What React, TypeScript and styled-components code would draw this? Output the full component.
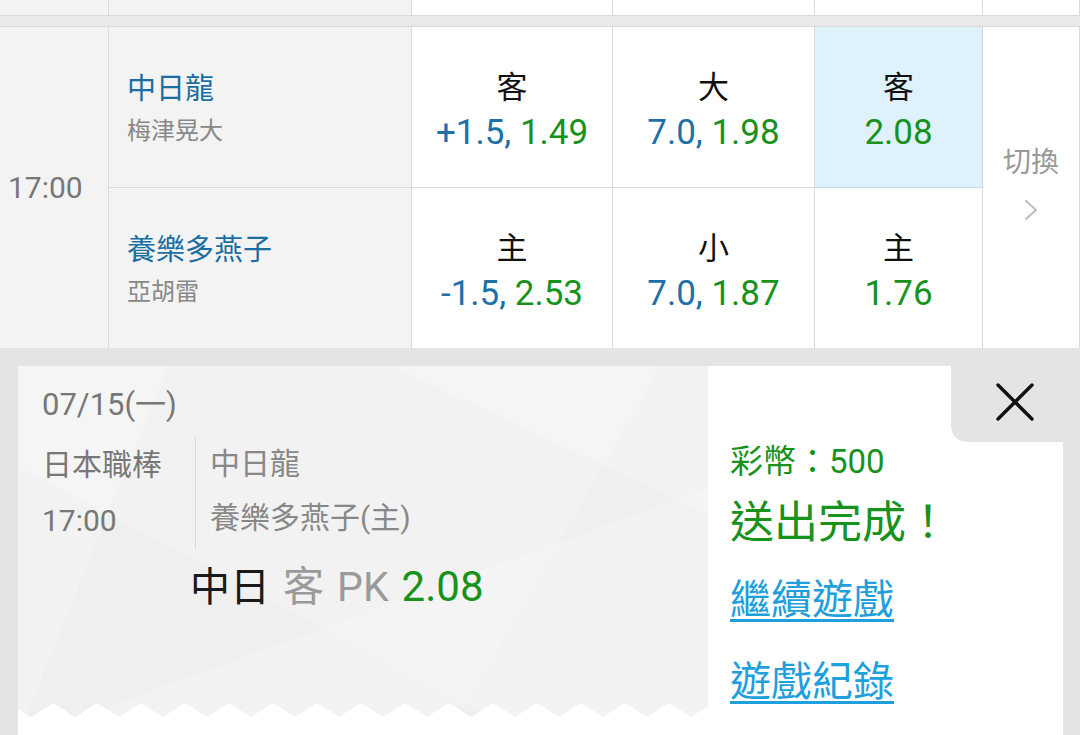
import React from 'react';
import styled, { createGlobalStyle } from 'styled-components';

const GlobalStyle = createGlobalStyle`
  html, body {
    margin: 0;
    padding: 0;
    background: #e4e4e4;
  }
  body {
    font-family: Roboto, "Noto Sans CJK TC", sans-serif;
  }
  * {
    box-sizing: border-box;
  }
`;

const COLUMNS = '109px 303px 201px 202px 168px 1fr';
const LINE = '#dadada';
const GREEN = '#17921d';
const BLUE = '#1d70a8';

const Page = styled.div`
  width: 1080px;
  height: 735px;
  overflow: hidden;
  background: #e4e4e4;
`;

const PrevRow = styled.div`
  display: grid;
  grid-template-columns: ${COLUMNS};
  height: 16px;
  border-bottom: 1px solid ${LINE};
`;

const PrevCell = styled.div<{ $shade?: boolean }>`
  background: ${({ $shade }) => ($shade ? '#f3f3f3' : '#fff')};
  border-right: 1px solid ${LINE};
`;

const Band = styled.div`
  height: 11px;
  background: #e9e9e9;
  border-bottom: 1px solid ${LINE};
`;

const MatchGrid = styled.div`
  display: grid;
  grid-template-columns: ${COLUMNS};
  grid-template-rows: 161px 160px;
  background: #fff;
`;

const TimeCell = styled.div`
  grid-column: 1;
  grid-row: 1 / span 2;
  display: flex;
  align-items: center;
  padding-left: 8px;
  background: #f3f3f3;
  border-right: 1px solid ${LINE};
  font-size: 30px;
  color: #777;
`;

const TeamCell = styled.div<{ $first?: boolean }>`
  grid-column: 2;
  display: flex;
  flex-direction: column;
  justify-content: center;
  padding: 10px 0 0 18px;
  background: #f3f3f3;
  border-right: 1px solid ${LINE};
  border-bottom: ${({ $first }) => ($first ? `1px solid ${LINE}` : 'none')};
`;

const TeamName = styled.div`
  font-size: 29px;
  line-height: 38px;
  color: #1b6ea2;
`;

const Pitcher = styled.div`
  font-size: 24px;
  line-height: 46px;
  color: #888;
`;

const OddsCell = styled.div<{ $first?: boolean; $active?: boolean }>`
  display: flex;
  flex-direction: column;
  align-items: center;
  justify-content: center;
  padding-top: 10px;
  background: ${({ $active }) => ($active ? '#dff1fb' : '#fff')};
  border-right: 1px solid ${({ $active }) => ($active ? '#c4dce8' : LINE)};
  border-bottom: ${({ $first, $active }) =>
    $first ? `1px solid ${$active ? '#c4dce8' : LINE}` : 'none'};
`;

const OddsLabel = styled.div`
  font-size: 31px;
  line-height: 42px;
  color: #111;
`;

const OddsValue = styled.div`
  font-size: 35px;
  line-height: 48px;
  white-space: pre;
`;

const Line = styled.span`
  color: ${BLUE};
`;

const Price = styled.span`
  color: ${GREEN};
`;

const SwitchCell = styled.div`
  grid-column: 6;
  grid-row: 1 / span 2;
  display: flex;
  flex-direction: column;
  align-items: center;
  justify-content: center;
  gap: 17px;
  padding-bottom: 11px;
  border-right: 1px solid ${LINE};
  font-size: 28px;
  line-height: 38px;
  color: #999;
`;

const Overlay = styled.div`
  padding: 18px 17px 0 18px;
`;

const Card = styled.div`
  display: flex;
  height: 400px;
  background: #fff;
`;

const Ticket = styled.div`
  width: 690px;
  height: 351px;
  display: flex;
  flex-direction: column;
  background:
    linear-gradient(112deg, rgba(255, 255, 255, 0.22) 0 18%, transparent 18%),
    linear-gradient(205deg, rgba(255, 255, 255, 0.2) 0 22%, transparent 22%),
    linear-gradient(160deg, transparent 0 62%, rgba(255, 255, 255, 0.18) 62%),
    linear-gradient(28deg, rgba(0, 0, 0, 0.012) 0 35%, transparent 35%),
    linear-gradient(300deg, rgba(0, 0, 0, 0.01) 0 28%, transparent 28%),
    #f2f2f2;
`;

const DateLine = styled.div`
  padding: 12px 0 0 24px;
  font-size: 31px;
  line-height: 54px;
  color: #777;
`;

const InfoRow = styled.div`
  display: flex;
  margin-top: 5px;
  padding-left: 24px;
`;

const League = styled.div`
  width: 153px;
  font-size: 30px;
  line-height: 56px;
  color: #777;
`;

const Teams = styled.div`
  padding-left: 14px;
  border-left: 1px solid #d6d6d6;
  font-size: 30px;
  line-height: 54px;
  color: #888;
`;

const BetLine = styled.div`
  margin-top: 10px;
  padding-left: 172px;
  font-size: 40px;
  line-height: 56px;
  white-space: pre;
  word-spacing: 3px;
`;

const BetTeam = styled.span`
  color: #1a1a1a;
`;

const BetType = styled.span`
  color: #9a9a9a;
  font-size: 41px;
`;

const BetPrice = styled.span`
  color: ${GREEN};
  font-size: 42px;
`;

const Spacer = styled.div`
  flex: 1;
`;

const Zigzag = styled.svg`
  display: block;
  width: 100%;
  height: 14px;
`;

const Result = styled.div`
  flex: 1;
  display: flex;
  flex-direction: column;
  padding-left: 22px;
`;

const CloseRow = styled.div`
  display: flex;
  justify-content: flex-end;
`;

const CloseTab = styled.button`
  width: 112px;
  height: 76px;
  display: flex;
  align-items: center;
  justify-content: center;
  padding: 0 0 4px 16px;
  border: none;
  background: #e4e4e4;
  border-bottom-left-radius: 16px;
`;

const Coins = styled.div`
  font-size: 33px;
  line-height: 40px;
  color: ${GREEN};
`;

const Done = styled.div`
  margin-top: 12px;
  font-size: 44px;
  line-height: 58px;
  color: ${GREEN};
`;

const Link = styled.a<{ $gap: number }>`
  display: block;
  margin-top: ${({ $gap }) => $gap}px;
  font-size: 41px;
  line-height: 56px;
  color: #1fa0dc;
  text-decoration: underline;
  text-decoration-thickness: 3px;
  text-underline-offset: 5px;
`;

const matches = [
  {
    team: '中日龍',
    pitcher: '梅津晃大',
    odds: [
      { label: '客', line: '+1.5, ', price: '1.49' },
      { label: '大', line: '7.0, ', price: '1.98' },
      { label: '客', line: '', price: '2.08', active: true },
    ],
  },
  {
    team: '養樂多燕子',
    pitcher: '亞胡雷',
    odds: [
      { label: '主', line: '-1.5, ', price: '2.53' },
      { label: '小', line: '7.0, ', price: '1.87' },
      { label: '主', line: '', price: '1.76' },
    ],
  },
];

const Chevron = () => (
  <svg width="14" height="22" viewBox="0 0 14 22" fill="none">
    <path d="M2 2l10 9-10 9" stroke="#bdbdbd" strokeWidth="2" strokeLinecap="round" strokeLinejoin="round" />
  </svg>
);

const CloseIcon = () => (
  <svg width="40" height="40" viewBox="0 0 40 40" fill="none">
    <path d="M3 3l34 34M37 3L3 37" stroke="#111" strokeWidth="3.4" strokeLinecap="round" />
  </svg>
);

export default function App() {
  return (
    <Page>
      <GlobalStyle />
      <PrevRow>
        <PrevCell $shade />
        <PrevCell $shade />
        <PrevCell />
        <PrevCell />
        <PrevCell />
        <PrevCell />
      </PrevRow>
      <Band />
      <MatchGrid>
        <TimeCell>17:00</TimeCell>
        <SwitchCell>
          <span>切換</span>
          <Chevron />
        </SwitchCell>
        {matches.map((m, i) => (
          <React.Fragment key={m.team}>
            <TeamCell $first={i === 0} style={{ gridRow: i + 1 }}>
              <TeamName>{m.team}</TeamName>
              <Pitcher>{m.pitcher}</Pitcher>
            </TeamCell>
            {m.odds.map((o, j) => (
              <OddsCell
                key={j}
                $first={i === 0}
                $active={o.active}
                style={{ gridRow: i + 1, gridColumn: j + 3 }}
              >
                <OddsLabel>{o.label}</OddsLabel>
                <OddsValue>
                  {o.line && <Line>{o.line}</Line>}
                  <Price>{o.price}</Price>
                </OddsValue>
              </OddsCell>
            ))}
          </React.Fragment>
        ))}
      </MatchGrid>
      <Overlay>
        <Card>
          <Ticket>
            <DateLine>07/15(一)</DateLine>
            <InfoRow>
              <League>
                <div>日本職棒</div>
                <div>17:00</div>
              </League>
              <Teams>
                <div>中日龍</div>
                <div>養樂多燕子(主)</div>
              </Teams>
            </InfoRow>
            <BetLine>
              <BetTeam>中日</BetTeam> <BetType>客 PK</BetType> <BetPrice>2.08</BetPrice>
            </BetLine>
            <Spacer />
            <Zigzag preserveAspectRatio="none">
              <defs>
                <pattern id="teeth" x="13" y="0" width="44" height="14" patternUnits="userSpaceOnUse">
                  <path d="M0 14L19.5 1.6Q22 0 24.5 1.6L44 14Z" fill="#fff" />
                </pattern>
              </defs>
              <rect width="100%" height="14" fill="url(#teeth)" />
            </Zigzag>
          </Ticket>
          <Result>
            <CloseRow>
              <CloseTab aria-label="close">
                <CloseIcon />
              </CloseTab>
            </CloseRow>
            <Coins>彩幣：500</Coins>
            <Done>送出完成！</Done>
            <Link href="#" $gap={20}>繼續遊戲</Link>
            <Link href="#" $gap={26}>遊戲紀錄</Link>
          </Result>
        </Card>
      </Overlay>
    </Page>
  );
}
